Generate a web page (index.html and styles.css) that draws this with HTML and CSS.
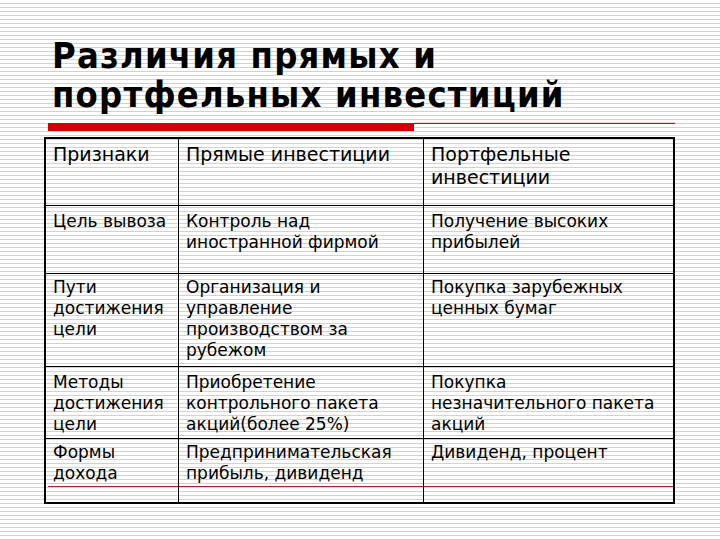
FILE: index.html
```html
<!DOCTYPE html>
<html lang="ru">
<head>
<meta charset="utf-8">
<title>Различия прямых и портфельных инвестиций</title>
<link rel="stylesheet" href="styles.css">
</head>
<body>
<div class="slide">
  <h1 class="title">Различия прямых и<br>портфельных инвестиций</h1>
  <div class="rule"><div class="rule-red"></div><div class="rule-thin"></div></div>
  <table class="grid">
    <colgroup><col class="c1"><col class="c2"><col class="c3"></colgroup>
    <tr class="r1"><td>Признаки</td><td>Прямые инвестиции</td><td>Портфельные инвестиции</td></tr>
    <tr class="r2"><td>Цель вывоза</td><td>Контроль над иностранной фирмой</td><td>Получение высоких прибылей</td></tr>
    <tr class="r3"><td>Пути достижения цели</td><td>Организация и управление производством за рубежом</td><td>Покупка зарубежных ценных бумаг</td></tr>
    <tr class="r4"><td>Методы достижения цели</td><td>Приобретение контрольного пакета акций(более 25%)</td><td>Покупка незначительного пакета акций</td></tr>
    <tr class="r5"><td>Формы дохода</td><td>Предпринимательская прибыль, дивиденд</td><td>Дивиденд, процент</td></tr>
  </table>
</div>
</body>
</html>
```

FILE: styles.css
```css
html, body {
  margin: 0;
  padding: 0;
}
body {
  width: 720px;
  height: 540px;
  overflow: hidden;
  background: repeating-linear-gradient(to bottom, #ffffff 0 3px, #d2d2d2 3px 4px);
  font-family: "DejaVu Sans", Verdana, sans-serif;
  color: #000;
}
.slide {
  padding-top: 36px;
}
.title {
  margin: 0 0 0 52px;
  font-family: "DejaVu Sans Condensed", "DejaVu Sans", sans-serif;
  font-stretch: condensed;
  font-weight: bold;
  font-size: 36px;
  line-height: 39px;
  letter-spacing: 1.2px;
  white-space: nowrap;
}
.rule {
  display: flex;
  align-items: flex-start;
  margin: 9px 0 0 48px;
  width: 627px;
  height: 8px;
}
.rule-red {
  width: 366px;
  height: 8px;
  background: #d00000;
}
.rule-thin {
  flex: 1;
  height: 1px;
  background: #8b2020;
  box-shadow: 0 -1px 0 #f3d6d6;
}
.grid {
  margin: 6px 0 0 44px;
  width: 631px;
  border: 2px solid #000;
  border-spacing: 0;
  table-layout: fixed;
  font-size: 17px;
  line-height: 21px;
}
.c1 { width: 133px; }
.c2 { width: 245px; }
.c3 { width: 249px; }
.grid td {
  box-sizing: border-box;
  vertical-align: top;
  padding: 5px 6px 0 7px;
  border-right: 1px solid #000;
  border-bottom: 1px solid #000;
}
.grid td:last-child { border-right: none; }
.grid tr:last-child td { border-bottom: none; }
.r1 td { height: 67px; font-size: 19px; line-height: 23px; padding-top: 4px; }
.r2 td { height: 68px; padding-top: 5px; }
.r3 td { height: 93px; padding-top: 3px; }
.r4 td { height: 72px; padding-top: 5px; }
.r5 td {
  height: 63px;
  padding-top: 3px;
  background: linear-gradient(#a02828, #a02828) no-repeat 0 47px / 100% 1px;
}
.r5 td:first-child { background-position: 2px 47px; }
```
